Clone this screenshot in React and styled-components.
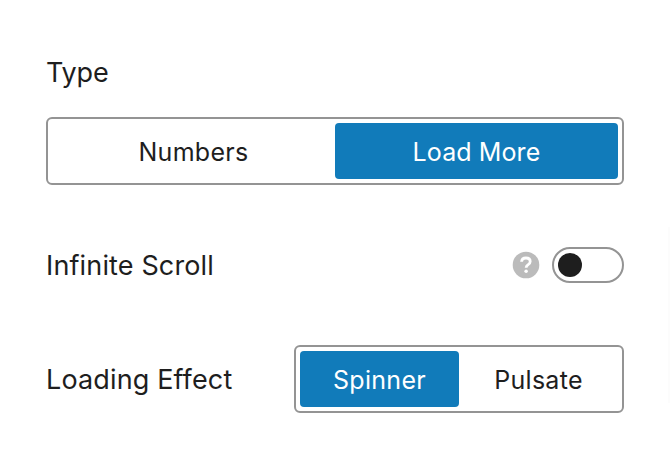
import React from "react";
import styled, { createGlobalStyle } from "styled-components";

const GlobalStyle = createGlobalStyle`
  *, *::before, *::after { box-sizing: border-box; }
  body { margin: 0; background: #fff; }
`;

const Panel = styled.main`
  width: 670px;
  height: 456px;
  padding: 56px 46px 0;
  background: linear-gradient(#fcfcfc, #fcfcfc) right 0 top 227px / 2px 176px no-repeat #fff;
  color: #1e1e1e;
  font-family: Inter, "Liberation Sans", sans-serif;
  font-weight: 370;
  font-size: 27px;
`;

const Label = styled.span`
  display: block;
  padding-top: ${({ $drop }) => $drop || "0"};
  line-height: 34px;
  letter-spacing: ${({ $tracking }) => $tracking || "0.14px"};
  white-space: nowrap;
`;

const Row = styled.div`
  display: flex;
  align-items: center;
  justify-content: space-between;
  width: 578px;
  margin-top: ${({ $gap }) => $gap};
`;

const Segmented = styled.div`
  display: grid;
  grid-template-columns: ${({ $columns }) => $columns};
  width: ${({ $width }) => $width};
  height: 68px;
  margin-top: ${({ $gap }) => $gap || "0"};
  padding: 4px;
  border: 2px solid #949494;
  border-radius: 6px;
`;

const Segment = styled.button`
  height: 56px;
  padding: 2px 0 0;
  border: 0;
  border-radius: 4px;
  background: ${({ $active }) => ($active ? "#117bba" : "transparent")};
  color: ${({ $active }) => ($active ? "#fff" : "#1e1e1e")};
  font: inherit;
  font-size: 25px;
  letter-spacing: ${({ $tracking }) => $tracking || "0.3px"};
`;

const Controls = styled.div`
  display: flex;
  align-items: center;
  gap: 12px;
`;

const HelpIcon = styled.svg`
  display: block;
  width: 28px;
  height: 28px;
`;

const Toggle = styled.button`
  display: flex;
  align-items: center;
  width: 72px;
  height: 36px;
  padding: 0 4px;
  border: 2px solid #949494;
  border-radius: 18px;
  background: #fff;
`;

const Knob = styled.span`
  width: 24px;
  height: 24px;
  border-radius: 50%;
  background: #1e1e1e;
`;

export default function App() {
  return (
    <Panel>
      <GlobalStyle />
      <Label $tracking="-0.15px">Type</Label>
      <Segmented $columns="283px 283px" $width="578px" $gap="27px">
        <Segment>Numbers</Segment>
        <Segment $active $tracking="0.1px">Load More</Segment>
      </Segmented>
      <Row $gap="62px">
        <Label $drop="2px">Infinite Scroll</Label>
        <Controls>
          <HelpIcon viewBox="0 0 28 28" role="img" aria-label="Help">
            <circle cx="14" cy="14" r="13.3" fill="#bbb" />
            <path
              d="M9.6 10.8C9.7 8.4 11.5 7 14 7c2.5 0 4.2 1.4 4.2 3.5 0 1.8-1 2.6-2.3 3.4-1.2.8-1.7 1.3-1.7 2.5v.4"
              fill="none"
              stroke="#fff"
              strokeWidth="2.8"
            />
            <circle cx="14.1" cy="20.3" r="1.75" fill="#fff" />
          </HelpIcon>
          <Toggle aria-label="Infinite Scroll"><Knob /></Toggle>
        </Controls>
      </Row>
      <Row $gap="62px">
        <Label $drop="1px">Loading Effect</Label>
        <Segmented $columns="159px 159px" $width="330px">
          <Segment $active>Spinner</Segment>
          <Segment>Pulsate</Segment>
        </Segmented>
      </Row>
    </Panel>
  );
}
